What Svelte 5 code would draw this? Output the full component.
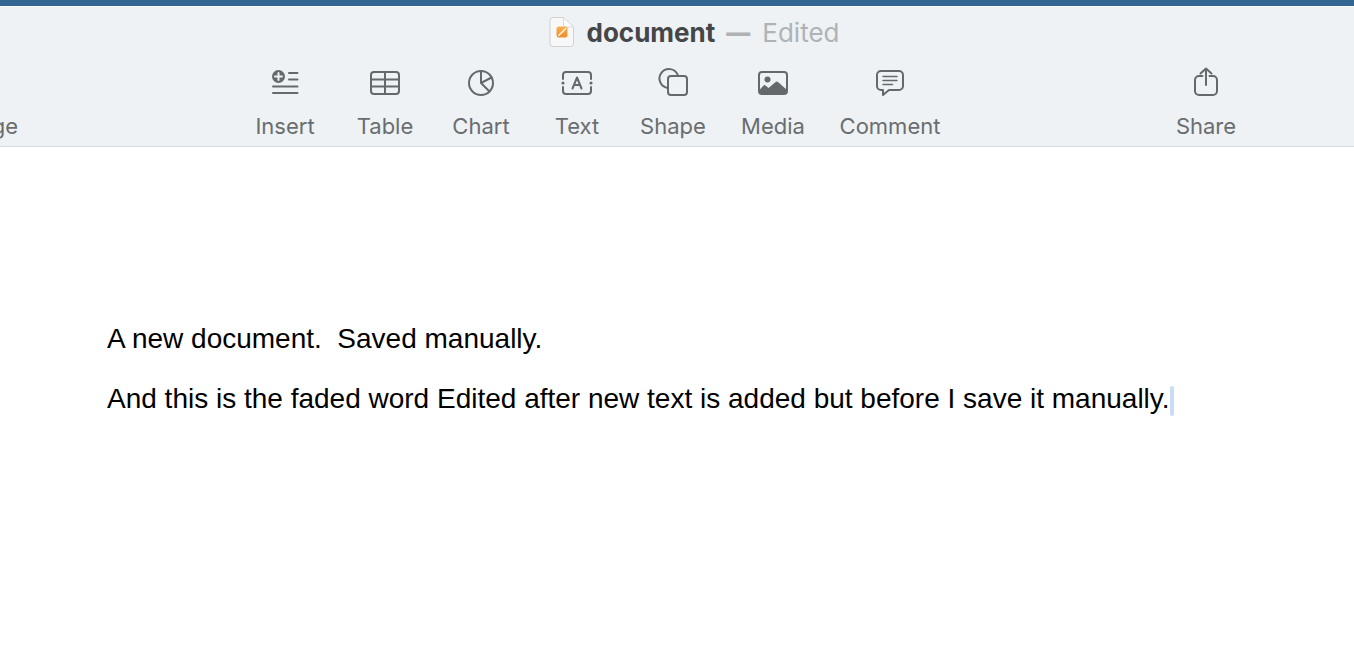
<script lang="ts">
  let {
    name = 'document',
    edited = true,
    paragraphs = [
      'A new document.\u00a0 Saved manually.',
      'And this is the faded word Edited after new text is added but before I save it manually.',
    ],
  }: {
    name?: string;
    edited?: boolean;
    paragraphs?: string[];
  } = $props();

  const tools = ['Insert', 'Table', 'Chart', 'Text', 'Shape', 'Media', 'Comment'];
</script>

{#snippet icon(tool: string)}
  <svg class="icon" viewBox="0 0 32 32" aria-hidden="true">
    {#if tool === 'Insert'}
      <circle cx="9.5" cy="9.5" r="6.5" class="solid" />
      <path d="M9.5 6v7M6 9.5h7" class="cutout" />
      <path d="M20 6h8.500M20 12.500h8.500M4 19.500h24.500M4 26h24.500" />
    {:else if tool === 'Table'}
      <rect x="2" y="5" width="28" height="22" rx="3" />
      <path d="M2 12.5h28M2 19.5h28M16 5v22" />
    {:else if tool === 'Chart'}
      <circle cx="16" cy="16" r="12" />
      <path d="M16 4v12l10.5-5.5M16 16l8.5 8.5" />
    {:else if tool === 'Text'}
      <path d="M2 12V8a3 3 0 0 1 3-3h22a3 3 0 0 1 3 3v4M2 20v4a3 3 0 0 0 3 3h22a3 3 0 0 0 3-3v-4" />
      <path d="M11.5 21.5 16 10.5l4.5 11M13 18h6" />
      <circle cx="2" cy="16" r="1.6" class="solid" />
      <circle cx="30" cy="16" r="1.6" class="solid" />
    {:else if tool === 'Shape'}
      <path d="M10.5 20.9A9.5 9.5 0 1 1 20.8 8" />
      <rect x="11" y="9" width="19" height="19" rx="3" />
    {:else if tool === 'Media'}
      <rect x="2" y="5" width="28" height="22" rx="3" />
      <circle cx="10.5" cy="12.5" r="3" class="solid" />
      <path d="M2 23.5 6.5 18.5q1-1 2 0l3 2.5 6.800-5.800q1.500-1.200 3 0L30 23v1a3 3 0 0 1-3 3H5a3 3 0 0 1-3-3z" class="solid" />
    {:else if tool === 'Comment'}
      <path d="M7 4h18a4 4 0 0 1 4 4v11a4 4 0 0 1-4 4H15l-6 5v-5H7a4 4 0 0 1-4-4V8a4 4 0 0 1 4-4z" />
      <path d="M9 9.5h14M9 13.5h14M9 17.5h9.5" class="thin" />
    {:else if tool === 'Share'}
      <path d="M12.5 9H9a4 4 0 0 0-4 4v11a4 4 0 0 0 4 4h14a4 4 0 0 0 4-4V13a4 4 0 0 0-4-4h-3.5" />
      <path d="M16 18V1.5M10.5 6.5 16 1.5l5.5 5" />
    {/if}
  </svg>
{/snippet}

<div class="window">
  <header>
    <div class="title-bar">
      <svg class="doc-icon" viewBox="0 1 26 32" aria-hidden="true">
        <defs>
          <linearGradient id="pen-tile" x1="0" y1="0" x2="0" y2="1">
            <stop offset="0" stop-color="#f7b04e" />
            <stop offset="1" stop-color="#ee8d2c" />
          </linearGradient>
        </defs>
        <path d="M4 1.5h10.5L24.5 11v16.5a3 3 0 0 1-3 3H4a3 3 0 0 1-3-3v-23a3 3 0 0 1 3-3z" fill="#f8f8f8" stroke="#cfd1d2" />
        <path d="M14.5 1.5V9a2 2 0 0 0 2 2h8z" fill="#fff" stroke="#d9dbdc" />
        <rect x="7.5" y="10.5" width="11" height="11" rx="2.5" fill="url(#pen-tile)" />
        <path d="M9.8 19.2l6.7-6.5" stroke="#fff4e2" stroke-width="1.6" stroke-linecap="round" />
      </svg>
      <h1>{name}</h1>
      {#if edited}
        <span class="dash">—</span>
        <span class="status">Edited</span>
      {/if}
    </div>

    <div class="toolbar">
      <button class="tool clipped">ge</button>
      <div class="tools">
        {#each tools as tool}
          <button class="tool">
            {@render icon(tool)}
            {tool}
          </button>
        {/each}
      </div>
      <button class="tool share">
        {@render icon('Share')}
        Share
      </button>
    </div>
  </header>

  <main>
    {#each paragraphs as text, i}
      <p>{text}{#if i === paragraphs.length - 1}<span class="caret"></span>{/if}</p>
    {/each}
  </main>
</div>

<style>
  :global(body) {
    margin: 0;
    background: #fff;
  }

  .window {
    min-height: 100vh;
    overflow: hidden;
  }

  header {
    box-sizing: border-box;
    padding-top: 10px;
    border-top: 6px solid #336592;
    border-bottom: 1px solid #d6d8d9;
    background: #eef2f5;
    box-shadow: inset 0 1px #fafcfd;
    font-family: Inter, 'Liberation Sans', sans-serif;
  }

  .title-bar {
    display: flex;
    align-items: center;
    justify-content: center;
    height: 34px;
    padding-left: 34px;
    font-size: 26px;
    line-height: 34px;
  }

  .doc-icon {
    width: 26px;
    height: 32px;
    margin-right: 12px;
  }

  h1 {
    margin: 0;
    color: #454647;
    font-size: 26px;
    font-weight: 700;
  }

  .dash {
    margin: 0 12px 0 11px;
    color: #aeb2b5;
    font-size: 24px;
    font-weight: 900;
  }

  .status {
    color: #afb3b6;
  }

  .toolbar {
    display: flex;
    align-items: flex-end;
    justify-content: space-between;
    padding: 17px 110px 4px 0;
  }

  .tools {
    display: grid;
    grid-template-columns: 76px repeat(4, 68px) 76px 102px;
    gap: 28px;
  }

  .tool {
    display: flex;
    flex-direction: column;
    align-items: center;
    gap: 11px;
    padding: 0;
    border: 0;
    background: none;
    color: #6a6d6f;
    font-family: inherit;
    font-size: 22px;
    line-height: 32px;
    white-space: nowrap;
  }

  .clipped {
    align-items: flex-end;
    box-sizing: border-box;
    width: 20px;
    padding-right: 2px;
    overflow: hidden;
  }

  .share {
    width: 76px;
  }

  .icon {
    width: 32px;
    height: 32px;
    fill: none;
    stroke: #65696c;
    stroke-width: 2;
    stroke-linecap: round;
    stroke-linejoin: round;
  }

  .solid {
    fill: #65696c;
    stroke: none;
  }

  .cutout {
    stroke: #eef2f5;
  }

  .thin {
    stroke-width: 1.5;
  }

  main {
    padding: 176px 107px 80px;
    color: #000;
    font-family: 'Liberation Sans', Arial, sans-serif;
    font-size: 28px;
    line-height: 32px;
  }

  p {
    margin: 0 0 28px;
  }

  .caret {
    display: inline-block;
    width: 4px;
    height: 30px;
    border-radius: 2px;
    background: #cbdcf8;
    vertical-align: middle;
  }
</style>
